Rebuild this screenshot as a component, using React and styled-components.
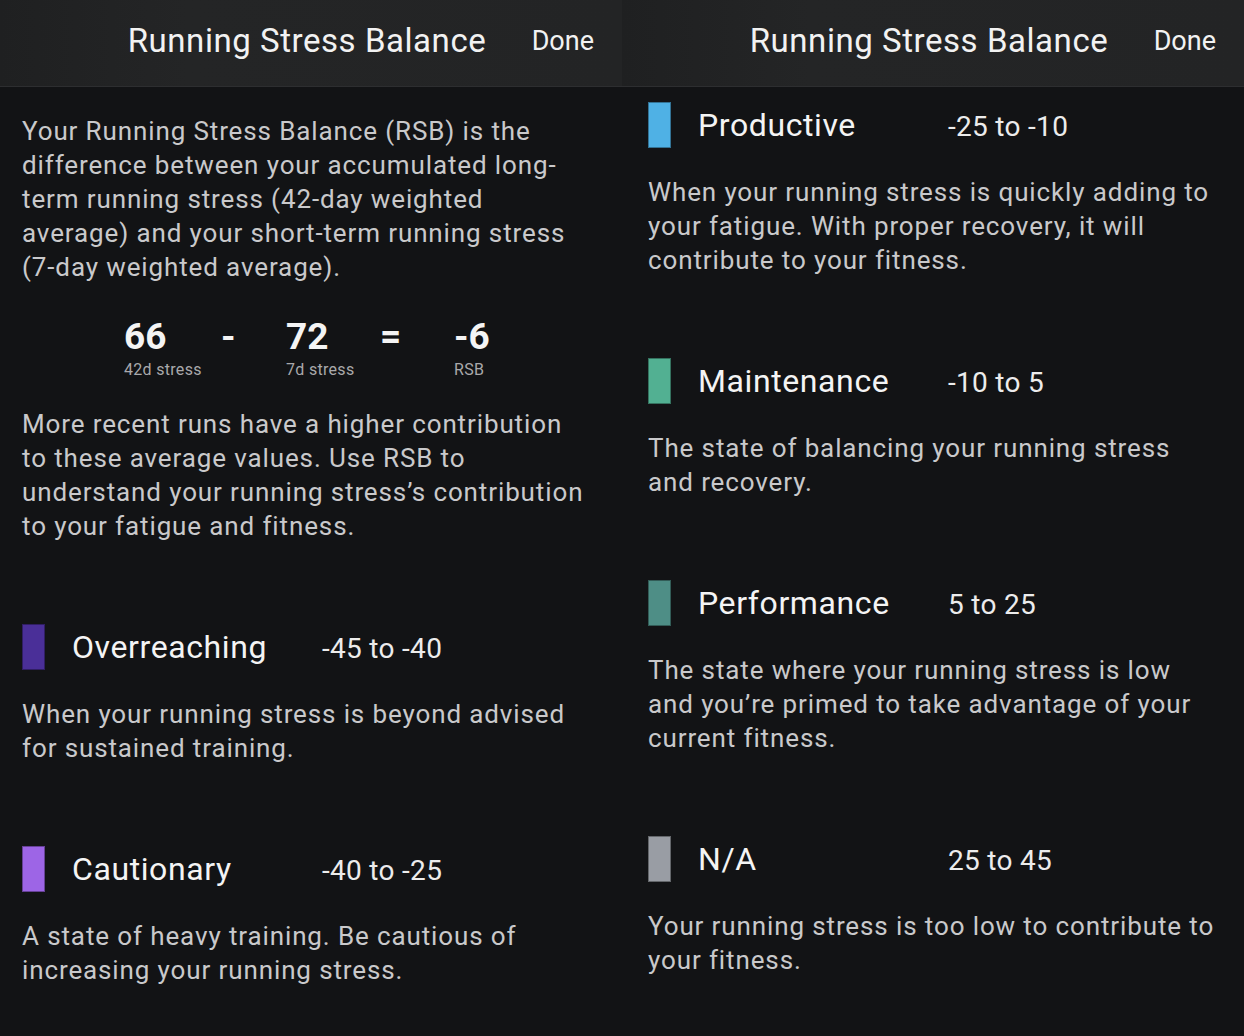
import React from "react";
import styled, { createGlobalStyle } from "styled-components";

const GlobalStyle = createGlobalStyle`
  html, body {
    margin: 0;
    padding: 0;
    background: #121315;
  }
  body {
    font-family: Roboto, "Liberation Sans", sans-serif;
    -webkit-font-smoothing: antialiased;
  }
`;

const zones = {
  overreaching: {
    name: "Overreaching",
    range: "-45 to -40",
    color: "#4a2f98",
    text: ["When your running stress is beyond advised", "for sustained training."],
  },
  cautionary: {
    name: "Cautionary",
    range: "-40 to -25",
    color: "#9d65e6",
    text: ["A state of heavy training. Be cautious of", "increasing your running stress."],
  },
  productive: {
    name: "Productive",
    range: "-25 to -10",
    color: "#4fb1e5",
    text: [
      "When your running stress is quickly adding to",
      "your fatigue. With proper recovery, it will",
      "contribute to your fitness.",
    ],
  },
  maintenance: {
    name: "Maintenance",
    range: "-10 to 5",
    color: "#52b092",
    text: ["The state of balancing your running stress", "and recovery."],
  },
  performance: {
    name: "Performance",
    range: "5 to 25",
    color: "#4e8e86",
    text: [
      "The state where your running stress is low",
      "and you’re primed to take advantage of your",
      "current fitness.",
    ],
  },
  na: {
    name: "N/A",
    range: "25 to 45",
    color: "#999da4",
    text: ["Your running stress is too low to contribute to", "your fitness."],
  },
};

const Lines = ({ lines }) =>
  lines.map((line, i) => (
    <React.Fragment key={i}>
      {line}
      {i < lines.length - 1 && <br />}
    </React.Fragment>
  ));

const Zone = ({ zone, first }) => (
  <Section $first={first}>
    <ZoneRow>
      <Swatch $color={zone.color} />
      <ZoneHeading>
        <ZoneName>{zone.name}</ZoneName>
        <ZoneRange>{zone.range}</ZoneRange>
      </ZoneHeading>
    </ZoneRow>
    <ZoneText>
      <Lines lines={zone.text} />
    </ZoneText>
  </Section>
);

const TopBar = () => (
  <Header>
    <span />
    <Title>Running Stress Balance</Title>
    <Done>Done</Done>
  </Header>
);

const App = () => {
  return (
    <Page>
      <GlobalStyle />
      <Panel>
        <TopBar />
        <Body $top={27} $left={22}>
          <Paragraph>
            <Lines
              lines={[
                "Your Running Stress Balance (RSB) is the",
                "difference between your accumulated long-",
                "term running stress (42-day weighted",
                "average) and your short-term running stress",
                "(7-day weighted average).",
              ]}
            />
          </Paragraph>
          <Equation>
            <Term>
              <Value>66</Value>
              <Caption>42d stress</Caption>
            </Term>
            <Sign>-</Sign>
            <Term>
              <Value>72</Value>
              <Caption>7d stress</Caption>
            </Term>
            <Sign>=</Sign>
            <Term>
              <Value>-6</Value>
              <Caption>RSB</Caption>
            </Term>
          </Equation>
          <Paragraph>
            <Lines
              lines={[
                "More recent runs have a higher contribution",
                "to these average values. Use RSB to",
                "understand your running stress’s contribution",
                "to your fatigue and fitness.",
              ]}
            />
          </Paragraph>
          <Zone zone={zones.overreaching} />
          <Zone zone={zones.cautionary} />
        </Body>
      </Panel>
      <Panel>
        <TopBar />
        <Body $top={15} $left={26}>
          <Zone zone={zones.productive} first />
          <Zone zone={zones.maintenance} />
          <Zone zone={zones.performance} />
          <Zone zone={zones.na} />
        </Body>
      </Panel>
    </Page>
  );
};

const Page = styled.div`
  display: flex;
  width: 1244px;
  height: 1036px;
  overflow: hidden;
  background: #121315;
`;

const Panel = styled.div`
  flex: 0 0 622px;
  display: flex;
  flex-direction: column;
`;

const Header = styled.div`
  height: 87px;
  box-sizing: border-box;
  padding: 0 8px 5px 0;
  display: grid;
  grid-template-columns: 1fr auto 1fr;
  align-items: center;
  background: linear-gradient(90deg, #1f2021 0%, #242526 30%, #232425 100%);
  border-bottom: 1px solid #2d2e30;
`;

const Title = styled.div`
  font-size: 33px;
  color: #f2f2f2;
  letter-spacing: 0.55px;
`;

const Done = styled.div`
  justify-self: end;
  margin-right: 20px;
  font-size: 27px;
  color: #f2f2f2;
`;

const Body = styled.div`
  padding: ${(p) => p.$top}px 10px 0 ${(p) => p.$left}px;
`;

const Paragraph = styled.p`
  margin: 0;
  font-size: 26px;
  line-height: 34px;
  letter-spacing: 0.88px;
  color: #c9c9cb;
  white-space: nowrap;
`;

const Equation = styled.div`
  display: grid;
  grid-template-columns: 97px 65px 94px 74px auto;
  margin: 31px 0 28px 102px;
  align-items: start;
`;

const Term = styled.div`
  display: flex;
  flex-direction: column;
`;

const Value = styled.div`
  font-size: 37px;
  font-weight: 700;
  line-height: 44px;
  color: #f4f4f4;
`;

const Sign = styled(Value)``;

const Caption = styled.div`
  margin-top: 2px;
  font-size: 16px;
  line-height: 18px;
  letter-spacing: 0.3px;
  color: #a9a9ab;
`;

const Section = styled.div`
  margin-top: ${(p) => (p.$first ? 0 : 81)}px;
`;

const ZoneRow = styled.div`
  display: flex;
  align-items: center;
`;

const Swatch = styled.div`
  flex: 0 0 23px;
  height: 46px;
  box-sizing: border-box;
  background: ${(p) => p.$color};
  border: 1px solid rgba(0, 0, 0, 0.35);
`;

const ZoneHeading = styled.div`
  display: flex;
  align-items: baseline;
  margin-left: 27px;
`;

const ZoneName = styled.div`
  width: 250px;
  font-size: 32px;
  letter-spacing: 0.6px;
  color: #f4f4f4;
`;

const ZoneRange = styled.div`
  font-size: 28px;
  letter-spacing: 0.3px;
  color: #ececec;
`;

const ZoneText = styled(Paragraph)`
  margin-top: 27px;
`;

export default App;
